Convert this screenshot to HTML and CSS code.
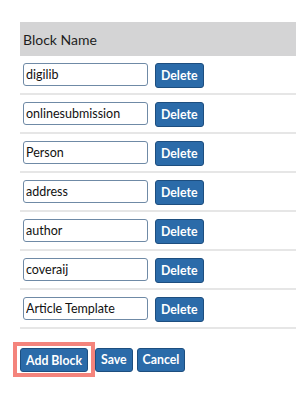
FILE: index.html
```html
<!DOCTYPE html>
<html lang="en">
<head>
    <meta charset="UTF-8">
    <meta name="viewport" content="width=device-width, initial-scale=1.0">
    <title>Blocks</title>
    <link rel="stylesheet" href="styles.css">
</head>

<body>
    <div class="wrapper">
        <table class="blocks">
            <thead>
                <tr><th>Block Name</th></tr>
            </thead>
            <tbody>
                <tr><td><input type="text" value="digilib"><button type="button" class="btn">Delete</button></td></tr>
                <tr><td><input type="text" value="onlinesubmission"><button type="button" class="btn">Delete</button></td></tr>
                <tr><td><input type="text" value="Person"><button type="button" class="btn">Delete</button></td></tr>
                <tr><td><input type="text" value="address"><button type="button" class="btn">Delete</button></td></tr>
                <tr><td><input type="text" value="author"><button type="button" class="btn">Delete</button></td></tr>
                <tr><td><input type="text" value="coveraij"><button type="button" class="btn">Delete</button></td></tr>
                <tr><td><input type="text" value="Article Template"><button type="button" class="btn">Delete</button></td></tr>
            </tbody>
        </table>

        <div class="actions">
            <span class="highlight"><button type="button" class="btn">Add Block</button></span>
            <button type="button" class="btn">Save</button>
            <button type="button" class="btn">Cancel</button>
        </div>
    </div>
</body>
</html>
```

FILE: styles.css
```css
* {
    margin: 0;
    padding: 0;
    box-sizing: border-box;
    font-family: Lato, "Liberation Sans", sans-serif;
}

body {
    background: #fff;
    color: #222;
}

.wrapper {
    padding: 22px 0 0 20px;
}

.blocks {
    width: 100%;
    border-collapse: collapse;
}

.blocks th {
    height: 34px;
    padding-left: 3px;
    background-color: #d4d4d5;
    font-size: 14px;
    font-weight: normal;
    text-align: left;
    color: #1e1e1e;
}

.blocks td {
    padding: 7px 0 5px 3px;
    border-bottom: 2px solid #e6e6e6;
}

.blocks td > * {
    vertical-align: top;
}

.blocks input {
    width: 125px;
    height: 23px;
    padding: 0 2px;
    margin-right: 7px;
    border: 1px solid #6f8aa6;
    border-radius: 3px;
    font-size: 12.5px;
    color: #111;
}

.btn {
    height: 25px;
    padding: 0 5px;
    border: 1px solid #1d4e7f;
    border-radius: 3px;
    background-color: #2b6ba9;
    color: #fff;
    font-size: 12.3px;
    font-weight: bold;
    cursor: pointer;
}

.actions {
    display: flex;
    align-items: center;
    gap: 4px;
    margin-top: 13px;
    margin-left: -7px;
}

.actions .btn {
    height: 24px;
}

.actions .highlight {
    display: flex;
    padding: 2px 3px 1px;
    border: 4px solid #f4847c;
    margin-right: -4px;
}
```
